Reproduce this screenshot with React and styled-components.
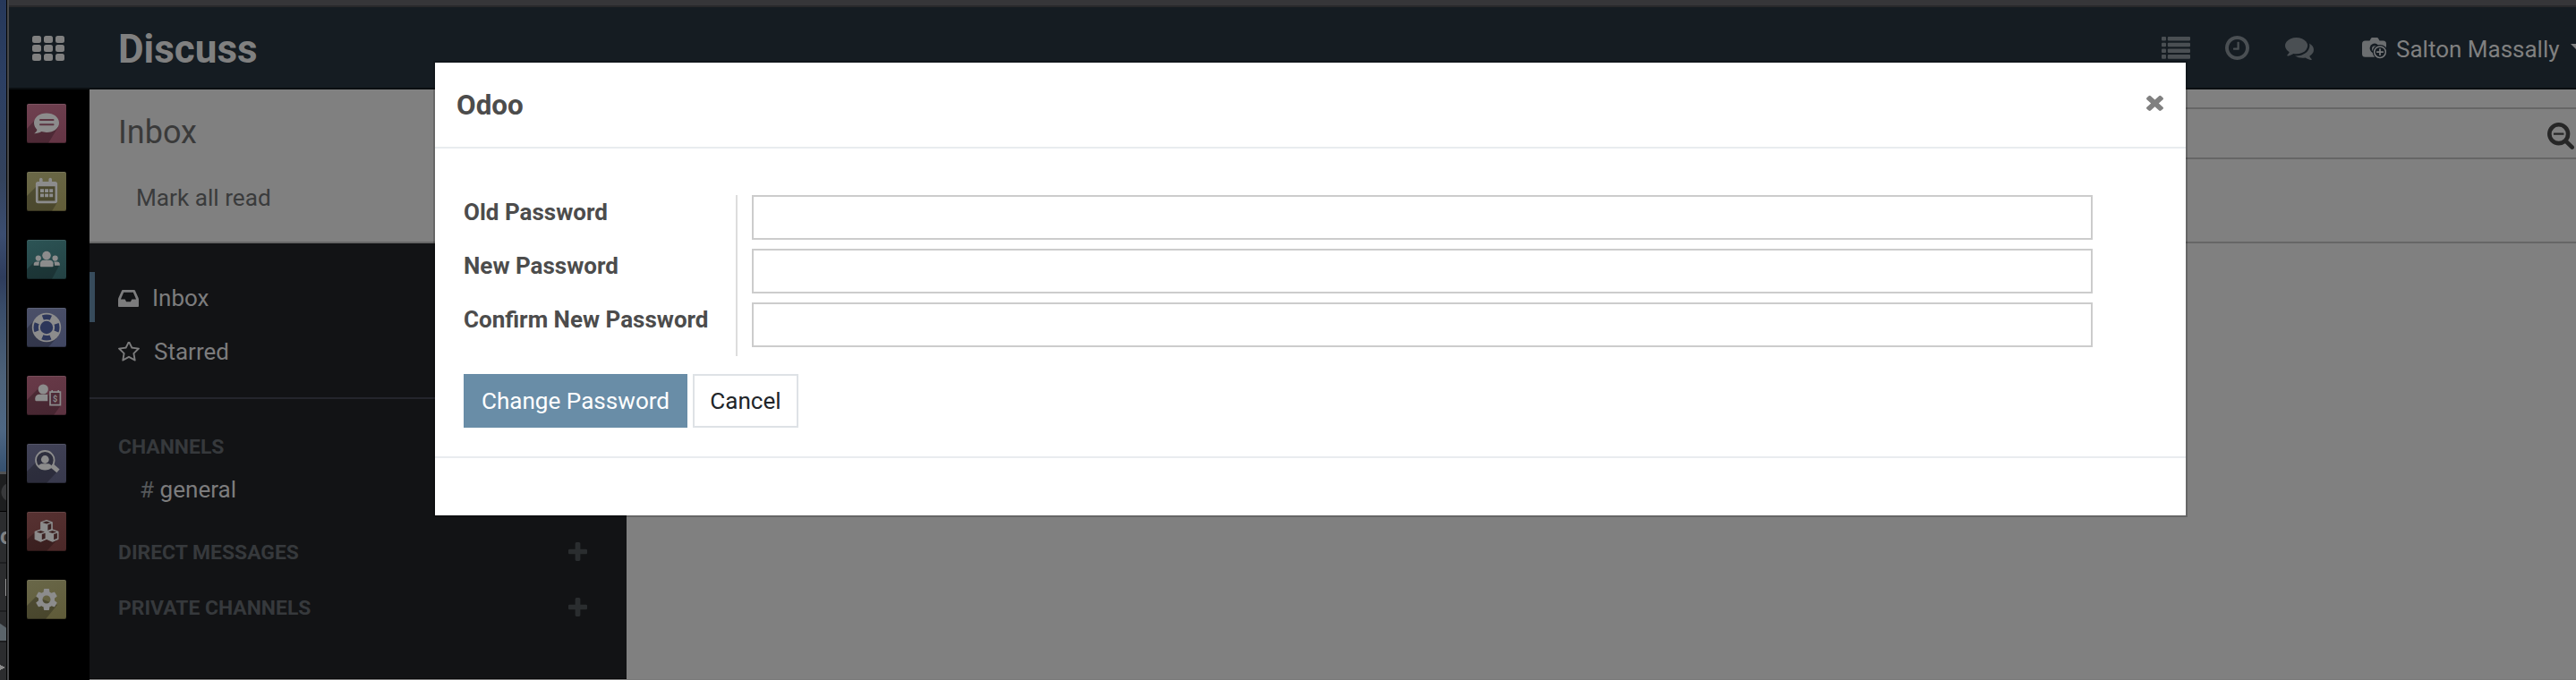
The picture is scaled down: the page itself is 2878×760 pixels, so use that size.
import React from 'react';
import styled, { createGlobalStyle, css } from 'styled-components';
import { MdSettings } from 'react-icons/md';

const GlobalStyle = createGlobalStyle`
  * { box-sizing: border-box; }
  body { margin: 0; overflow: hidden; background: #808080; font-family: Roboto, "Liberation Sans", sans-serif; font-size: 26px; color: #3b3b3b; }
  svg { display: block; flex: none; }
`;

/* ---------- font glyph icons on a 1792 grid ---------- */
const GLYPHS = {
  comments: 'M1408 768q0 139-94 257t-256.5 186.5-353.5 68.5q-86 0-176-16-124 88-278 128-36 9-86 16h-3q-11 0-20.5-8t-11.5-21q-1-3-1-6.5t.5-6.5 2-6l2.5-5 3.5-5.5 4-5 4.5-5 4-4.5q5-6 23-25t26-29.5 22.5-29 25-38.5 20.5-44q-124-72-195-177t-71-224q0-139 94-257t256.5-186.5 353.5-68.5 353.5 68.5 256.5 186.5 94 257zm384 256q0 120-71 224.5t-195 176.5q10 24 20.5 44t25 38.5 22.5 29 26 29.5 23 25q1 1 4 4.5t4.5 5 4 5 3.5 5.5l2.5 5 2 6 .5 6.5-1 6.500q-3 14-13 22t-22 7q-50-7-86-16-154-40-278-128-90 16-176 16-271 0-472-132 58 4 88 4 161 0 309-45t264-129q125-92 192-212t67-254q0-77-23-152 129 71 204 178t75 230z',
  clock: 'M1024 544v448q0 14-9 23t-23 9h-320q-14 0-23-9t-9-23v-64q0-14 9-23t23-9h224v-352q0-14 9-23t23-9h64q14 0 23 9t9 23zm416 352q0-148-73-273t-198-198-273-73-273 73-198 198-73 273 73 273 198 198 273 73 273-73 198-198 73-273zm224 0q0 209-103 385.5t-279.5 279.5-385.5 103-385.5-103-279.5-279.5-103-385.5 103-385.5 279.5-279.5 385.5-103 385.5 103 279.5 279.5 103 385.5z',
  times: 'M1490 1322q0 40-28 68l-136 136q-28 28-68 28t-68-28l-294-294-294 294q-28 28-68 28t-68-28l-136-136q-28-28-28-68t28-68l294-294-294-294q-28-28-28-68t28-68l136-136q28-28 68-28t68 28l294 294 294-294q28-28 68-28t68 28l136 136q28 28 28 68t-28 68l-294 294 294 294q28 28 28 68z',
  searchMinus: 'M1088 800v64q0 13-9.5 22.5t-22.5 9.5h-576q-13 0-22.5-9.5t-9.5-22.5v-64q0-13 9.5-22.5t22.5-9.5h576q13 0 22.5 9.5t9.5 22.5zm128 32q0-185-131.5-316.5t-316.5-131.5-316.5 131.5-131.5 316.5 131.5 316.5 316.5 131.5 316.5-131.5 131.5-316.5zm512 832q0 53-37.5 90.5t-90.5 37.5q-54 0-90-38l-343-342q-179 124-399 124-143 0-273.5-55.5t-225-150-150-225-55.5-273.5 55.5-273.5 150-225 225-150 273.5-55.5 273.5 55.5 225 150 150 225 55.5 273.5q0 220-124 399l343 343q37 37 37 90z',
  star: 'M1201 1004l306-297-422-62-189-382-189 382-422 62 306 297-73 421 378-199 377 199zm527-357q0 22-26 48l-363 354 86 500q1 7 1 20 0 50-41 50-19 0-40-12l-449-236-449 236q-22 12-40 12-21 0-31.5-14.5t-10.5-35.5q0-6 2-20l86-500-364-354q-25-27-25-48 0-37 56-46l502-73 225-455q19-41 49-41t49 41l225 455 502 73q56 9 56 46z',
  plus: 'M1600 736v192q0 40-28 68t-68 28h-416v416q0 40-28 68t-68 28h-192q-40 0-68-28t-28-68v-416h-416q-40 0-68-28t-28-68v-192q0-40 28-68t68-28h416v-416q0-40 28-68t68-28h192q40 0 68 28t28 68v416h416q40 0 68 28t28 68z',
  inbox: 'M1151 960h316q-1-3-2.5-8.5t-2.5-7.5l-212-496h-708l-212 496q-1 3-2.5 8.5t-2.5 7.5h316l95 192h320zm513 30v482q0 26-19 45t-45 19h-1408q-26 0-45-19t-19-45v-482q0-62 25-123l238-552q10-25 36.5-42t52.5-17h832q26 0 52.5 17t36.5 42l238 552q25 61 25 123z',
};

/* box: x, y, width, height of the ink on the 1792 grid */
const Glyph = ({ name, box, width, height }) => (
  <svg viewBox={box} width={width} height={height} preserveAspectRatio="none" fill="currentColor">
    <path d={GLYPHS[name]} />
  </svg>
);

/* ---------- page frame ---------- */
const Screen = styled.div`
  position: relative;
  display: flex;
  width: 100%;
  height: 760px;
  overflow: hidden;
`;

const DesktopEdge = styled.div`
  flex: none;
  width: 7px;
  height: 760px;
  overflow: hidden;
  display: flex;
  flex-direction: column;
  background: #2b2c2e;
`;

const Wallpaper = styled.div`
  flex: none;
  height: 527px;
  background: linear-gradient(#26385a 0, #2c3f63 90px, #33425c 200px, #3b4d70 262px, #2e3c5c 310px, #394c69 345px, #4c6178 420px, #4e6784 480px, #35506f 527px);
`;

const BackWindow = styled.div`
  flex: 1;
  min-height: 0;
  border-top: 3px solid #505254;
  font-size: 25px;
  font-weight: 700;
  line-height: 56px;
  color: #808284;
`;

const BackTab = styled.div`
  height: 42px;
  border-bottom: 1px solid #000;
  background: radial-gradient(circle 11px at 12px 20px, #38393b 10px, transparent 11px), #1d1e1f;
`;

const BackRow = styled.div`
  height: ${(p) => p.$h}px;
  border-bottom: 2px solid #1d1e20;
  background: ${(p) => p.$bg || '#2b2c2e'};
  overflow: hidden;
`;

const Fragment = styled.span`
  display: block;
`;

const Caret = styled.i`
  display: block;
  width: 1px;
  height: 19px;
  margin: 17px 0 0 6px;
  background: #9a9a9a;
`;

const WindowFrame = styled.div`
  flex: none;
  width: 3px;
  border-left: 1px solid #050505;
  background: #47484a;
`;

const Window = styled.div`
  flex: 1;
  min-width: 0;
  display: flex;
  flex-direction: column;
`;

const Chrome = styled.div`
  flex: none;
  height: 8px;
  background: #363639;
  border-bottom: 2px solid #29292b;
`;

/* ---------- navbar ---------- */
const Navbar = styled.header`
  flex: none;
  display: flex;
  align-items: center;
  height: 92px;
  background: #151c22;
  border-bottom: 2px solid #0a0e11;
`;

const AppsToggle = styled.div`
  display: grid;
  grid-template-columns: repeat(3, 10px);
  grid-auto-rows: 8px;
  gap: 2px 3px;
  width: 36px;
  margin-left: 26px;
  margin-top: 2px;
`;

const Cell = styled.i`
  border-radius: 2.5px;
  background: #808080;
`;

const Brand = styled.div`
  flex: 1;
  margin-left: 60px;
  padding-top: 3px;
  font-size: 44px;
  line-height: 52px;
  font-weight: 700;
  color: #808080;
`;

const Systray = styled.div`
  display: flex;
  align-items: center;
  color: #4a4f53;
`;

const TrayItem = styled.div`
  width: ${(p) => p.$w}px;
  padding-top: ${(p) => p.$top || 0}px;
`;

const UserMenu = styled.div`
  display: flex;
  align-items: center;
  width: 239px;
  gap: 10px;
  padding-top: 3px;
  line-height: 30px;
  color: #808080;
  white-space: nowrap;
`;

const DropArrow = styled.i`
  margin-left: 2px;
  margin-top: -4px;
  border: 7px solid transparent;
  border-bottom: 0;
  border-top-color: #808080;
`;

const Main = styled.div`
  flex: 1;
  min-height: 0;
  display: flex;
`;

/* ---------- app rail ---------- */
const Rail = styled.nav`
  flex: none;
  width: 90px;
  padding: 16px 0 0 20px;
  display: flex;
  flex-direction: column;
  gap: 32px;
  background: #000;
`;

const tileTint = css`
  background: linear-gradient(160deg, ${(p) => p.$from}, ${(p) => p.$to});
`;

const Tile = styled.div`
  flex: none;
  width: 44px;
  height: 44px;
  border-radius: 2px;
  overflow: hidden;
  box-shadow: inset 0 1px 0 rgba(255, 255, 255, 0.1), inset 0 -1px 0 rgba(0, 0, 0, 0.25);
  ${tileTint}
`;

/* ---------- content ---------- */
const Content = styled.div`
  flex: 1;
  min-width: 0;
  display: flex;
  flex-direction: column;
`;

const ControlPanel = styled.div`
  flex: none;
  display: flex;
  justify-content: space-between;
  height: 172px;
  border-bottom: 2px solid #666;
  background: #808080;
`;

const PanelTitle = styled.div`
  padding: 25px 0 0 32px;
`;

const Crumb = styled.div`
  font-size: 36px;
  line-height: 46px;
  color: #3a3a3a;
`;

const PanelAction = styled.div`
  margin: 34px 0 0 20px;
  font-size: 26.2px;
  line-height: 32px;
  color: #3a3b3c;
`;

const SearchField = styled.div`
  width: 1480px;
  height: 58px;
  margin-top: 20px;
  padding: 15px 2px 0 0;
  display: flex;
  justify-content: flex-end;
  border: solid #666;
  border-width: 2px 0;
  color: #262626;
`;

const Body = styled.div`
  flex: 1;
  display: flex;
  border-bottom: 1px solid #797979;
`;

const Sidebar = styled.aside`
  width: 600px;
  padding-top: 32px;
  background: #121315;
  border-bottom: 1px solid #070708;
  color: #7c7c7d;
`;

const Mailbox = styled.div`
  display: flex;
  align-items: center;
  height: 56px;
  margin-bottom: 4px;
  padding: 2px 0 0 ${(p) => (p.$active ? 26 : 32)}px;
  border-left: ${(p) => (p.$active ? '6px solid #374b5b' : '0')};
  line-height: 30px;
  gap: ${(p) => p.$gap}px;
`;

const Divider = styled.hr`
  height: 2px;
  margin: 24px 0 0;
  border: 0;
  background: #24252c;
`;

const GroupTitle = styled.div`
  display: flex;
  justify-content: space-between;
  align-items: center;
  height: 30px;
  margin-top: ${(p) => p.$top}px;
  padding: 0 44px 0 32px;
  font-size: 22.9px;
  line-height: 30px;
  font-weight: 700;
  color: #36393c;
  svg { color: #2a2d2f; margin-bottom: 4px; }
`;

const Channel = styled.div`
  margin: 16px 0 0 56px;
  font-size: 26.1px;
  line-height: 32px;
`;

const Hash = styled.span`
  color: #55585a;
`;

/* ---------- modal ---------- */
const Dialog = styled.section`
  position: absolute;
  left: 484px;
  top: 68px;
  width: 1960px;
  height: 510px;
  border: 2px solid rgba(0, 0, 0, 0.2);
  background: #fff;
  background-clip: padding-box;
`;

const DialogHeader = styled.div`
  display: flex;
  justify-content: space-between;
  height: 96px;
  padding: 29px 25px 0 24px;
  border-bottom: 2px solid #e9ecef;
  font-size: 31.4px;
  line-height: 37px;
  font-weight: 700;
  color: #4c4c4c;
`;

const CloseButton = styled.div`
  padding-top: 6px;
  color: #808080;
`;

const Form = styled.div`
  height: 346px;
  padding: 52px 104px 0 32px;
  border-bottom: 2px solid #e9ecef;
`;

const FieldGroup = styled.div`
  display: grid;
  grid-template-columns: 306px 1fr;
  grid-auto-rows: 60px;
`;

const FieldLabel = styled.label`
  border-right: 2px solid #ddd;
  font-weight: 700;
  line-height: 38px;
  color: #4c4c4c;
`;

const Input = styled.input`
  width: auto;
  height: 50px;
  margin: 0 0 0 16px;
  padding: 0 8px;
  border: 2px solid #ccc;
  border-radius: 0;
  background: #fff;
  font: inherit;
`;

const Actions = styled.div`
  display: flex;
  gap: 6px;
  margin-top: 20px;
`;

const Button = styled.button`
  height: 60px;
  width: ${(p) => (p.$primary ? 250 : 118)}px;
  padding: 0;
  border: 2px solid ${(p) => (p.$primary ? '#698da7' : '#dee2e6')};
  background: ${(p) => (p.$primary ? '#698da7' : '#fff')};
  color: ${(p) => (p.$primary ? '#fff' : '#212529')};
  font: 26.1px/54px Roboto, sans-serif;
`;

/* ---------- app tile drawings ---------- */
const INK = '#8c8c8c';
const shade = 'rgba(0,0,0,.24)';
const Art = ({ shadow, children }) => (
  <svg viewBox="0 0 44 44" width="44" height="44" fill={INK}>
    <path d={shadow} fill={shade} />
    {children}
  </svg>
);

const Cube = ({ x, y }) => (
  <g transform={`translate(${x} ${y})`} stroke={INK} strokeWidth="1.2" strokeLinejoin="round">
    <path d="M0-6.5L6.2-4.2V4L0 6.6L-6.2 4V-4.2Z" />
    <path d="M-4.6-4.1L0-5.6L4.6-4.1L0-2.5Z" fill="#3c2323" stroke="none" />
    <path d="M1.4-1.4L5.2-2.8V3.2L1.4 4.8Z" fill="#3c2323" stroke="none" />
  </g>
);

const APPS = [
  {
    id: 'discuss', from: '#6f4150', to: '#643444',
    art: (
      <Art shadow="M10 17L0 28V44H24L35 26Z">
        <path d="M22 10.5c8 0 14 4.600 14 10.700s-6 10.700-14 10.700c-2 0-4-.3-5.700-.8C14 32.500 11 33.300 8.200 33.200c1.700-1.200 2.800-2.700 3.200-4.300C9.300 27 8 24.200 8 21.200 8 15.100 14 10.500 22 10.500z" />
        <path d="M15 18H29.500M15 23.200H29.500" stroke="#5b3441" strokeWidth="2" strokeLinecap="round" />
      </Art>
    ),
  },
  {
    id: 'calendar', from: '#6a6848', to: '#625d38',
    art: (
      <Art shadow="M11 16L0 27V44H28L34 34Z">
        <path d="M12.500 11H14V8.500a1.700 1.700 0 013.600 0V11h6.800V8.500a1.700 1.700 0 013.600 0V11h3.500a2.600 2.600 0 012.600 2.600v19a2.600 2.600 0 01-2.600 2.600h-19a2.600 2.600 0 01-2.600-2.600v-19A2.600 2.600 0 0112.500 11z" />
        <path d="M12.600 16.300H31.500V32.500H12.600Z" fill="#4a472d" />
        <path d="M15 19.300h4v3.800h-4zM20.100 19.300h4v3.800h-4zM25.200 19.300h4v3.800h-4zM15 24.500h4v3.800h-4zM20.100 24.500h4v3.800h-4zM25.200 24.500h4v3.800h-4z" />
      </Art>
    ),
  },
  {
    id: 'contacts', from: '#2c5455', to: '#234143',
    art: (
      <Art shadow="M8 25L0 33V44H28L37 27Z">
        <circle cx="22" cy="17.600" r="4.800" />
        <circle cx="12.800" cy="20.600" r="3.100" />
        <circle cx="31.600" cy="20.600" r="3.100" />
        <path d="M14.800 29v-2.500c0-2.500 2-3.800 4-3.800h6.800c2 0 4 1.300 4 3.800V29a1.200 1.200 0 01-1.200 1.200H16A1.200 1.200 0 0114.800 29z" />
        <path d="M7.700 28.800v-1.800c0-1.600 1.300-2.600 3-2.600h3.600c-.6 1-.8 2-.8 4.400zM36.800 28.800v-1.800c0-1.600-1.300-2.600-3-2.600h-3.600c.6 1 .8 2 .8 4.400z" />
      </Art>
    ),
  },
  {
    id: 'helpdesk', from: '#4b5068', to: '#404662',
    art: (
      <Art shadow="M10 12L0 23V44H24L35 32Z">
        <circle cx="22" cy="22" r="16.200" />
        <circle cx="22" cy="22" r="11.800" fill="none" stroke="#2c365a" strokeWidth="5.400" strokeDasharray="9.270 9.270" strokeDashoffset="4.635" />
        <circle cx="22" cy="22" r="7.200" fill="#2c365a" />
      </Art>
    ),
  },
  {
    id: 'expenses', from: '#683a48', to: '#5c3240',
    art: (
      <Art shadow="M14 13L0 27V44H30L38 33Z">
        <circle cx="18.300" cy="15" r="5.600" />
        <path d="M9.300 27v-1.800c0-2.800 2.200-4.400 4.500-4.400h9.500v7.400H10.500A1.200 1.200 0 019.300 27z" />
        <path d="M26 18.200H37.400V32.700H26Z" fill="#4e2b37" stroke={INK} strokeWidth="1.700" />
        <path d="M28.200 16v3M35.200 16v3" stroke={INK} strokeWidth="1.600" />
        <text x="31.700" y="29" fontSize="9" fontWeight="700" textAnchor="middle">$</text>
      </Art>
    ),
  },
  {
    id: 'recruitment', from: '#414257', to: '#38394c',
    art: (
      <Art shadow="M11 20L0 31V44H22L34 31Z">
        <path d="M27.500 24L35 30.300" stroke={INK} strokeWidth="5" strokeLinecap="butt" />
        <circle cx="20.300" cy="18.300" r="10.300" fill="#2e2f3e" stroke={INK} strokeWidth="1.800" />
        <circle cx="20.300" cy="17.500" r="4.400" />
        <path d="M12.500 25c1.200-2.300 3.700-2.800 5.300-2.800h5c1.700 0 4.100.5 5.300 2.800-2 2.400-4.800 3.500-7.800 3.500s-5.800-1.100-7.800-3.500z" />
      </Art>
    ),
  },
  {
    id: 'inventory', from: '#573232', to: '#4b2828',
    art: (
      <Art shadow="M9 23L0 31V44H22L35 30Z">
        <Cube x={22} y={16} />
        <Cube x={15.400} y={26.500} />
        <Cube x={28.700} y={26.500} />
      </Art>
    ),
  },
  {
    id: 'settings', from: '#696749', to: '#5f5b38',
    art: (
      <Art shadow="M10 19L0 29V44H21L34 28Z">
        <MdSettings x="7" y="7" size={30} color={INK} />
      </Art>
    ),
  },
];

const ListIcon = () => (
  <svg width="32" height="25" viewBox="0 0 32 25" fill="currentColor">
    {[0, 6.700, 13.400, 20.100].map((y) => (
      <g key={y}>
        <rect x="0" y={y} width="5" height="4.600" rx="1" />
        <rect x="6.800" y={y} width="25.200" height="4.600" rx="1" />
      </g>
    ))}
  </svg>
);

const CameraIcon = () => (
  <svg width="28" height="25" viewBox="0 0 28 25">
    <path d="M3.500 3.500h5L10 .8c.3-.5.7-.8 1.200-.8h5.600c.5 0 .9.300 1.200.8l1.500 2.700h4A3.500 3.500 0 0127 7v11.200a3.500 3.500 0 01-3.500 3.500h-20A3.500 3.500 0 010 18.200V7a3.500 3.500 0 013.500-3.500z" fill="#6b6e70" />
    <circle cx="14" cy="12" r="5.400" fill="#151c22" />
    <circle cx="14.400" cy="12.600" r="3.400" fill="#6b6e70" />
    <circle cx="20" cy="16.200" r="8.300" fill="#151c22" />
    <circle cx="20" cy="16.200" r="6.300" fill="#151c22" stroke="#77797b" strokeWidth="1.500" />
    <path d="M20 12.300v7.800M16.100 16.200h7.800" stroke="#77797b" strokeWidth="1.700" />
  </svg>
);

const PlusIcon = () => <Glyph name="plus" box="192 128 1408 1408" width={21} height={21} />;

export default function App() {
  return (
    <Screen>
      <GlobalStyle />
      <DesktopEdge>
        <Wallpaper />
        <BackWindow>
          <BackTab />
          <BackRow $h={58}><Fragment>o</Fragment></BackRow>
          <BackRow $h={54}><Caret /></BackRow>
          <BackRow $h={34} $bg="linear-gradient(215deg, #2b2c2e 14px, #5b646a 15px)" />
          <BackRow $h={60} $bg="conic-gradient(from 245deg at 6px 28px, #8a8a8a 50deg, #2b2c2e 51deg)" />
        </BackWindow>
      </DesktopEdge>
      <WindowFrame />
      <Window>
        <Chrome />
        <Navbar>
          <AppsToggle>
            {Array.from({ length: 9 }, (_, i) => <Cell key={i} />)}
          </AppsToggle>
          <Brand>Discuss</Brand>
          <Systray>
            <TrayItem $w={71}><ListIcon /></TrayItem>
            <TrayItem $w={67}><Glyph name="clock" box="128 128 1536 1536" width={27} height={27} /></TrayItem>
            <TrayItem $w={86} $top={2}><Glyph name="comments" box="0 256 1792 1408" width={32} height={25} /></TrayItem>
            <UserMenu>
              <CameraIcon />
              <span>Salton Massally</span>
              <DropArrow />
            </UserMenu>
          </Systray>
        </Navbar>
        <Main>
          <Rail>
            {APPS.map((app) => (
              <Tile key={app.id} $from={app.from} $to={app.to}>{app.art}</Tile>
            ))}
          </Rail>
          <Content>
            <ControlPanel>
              <PanelTitle>
                <Crumb>Inbox</Crumb>
                <PanelAction>Mark all read</PanelAction>
              </PanelTitle>
              <SearchField>
                <Glyph name="searchMinus" box="64 128 1664 1664" width={30} height={30} />
              </SearchField>
            </ControlPanel>
            <Body>
              <Sidebar>
                <Mailbox $active $gap={15}>
                  <Glyph name="inbox" box="128 256 1536 1280" width={23} height={19} />
                  Inbox
                </Mailbox>
                <Mailbox $gap={16}>
                  <Glyph name="star" box="64 128 1664 1591" width={24} height={23} />
                  Starred
                </Mailbox>
                <Divider />
                <GroupTitle $top={39}>CHANNELS</GroupTitle>
                <Channel><Hash>#</Hash> general</Channel>
                <GroupTitle $top={40}>DIRECT MESSAGES<PlusIcon /></GroupTitle>
                <GroupTitle $top={32}>PRIVATE CHANNELS<PlusIcon /></GroupTitle>
              </Sidebar>
            </Body>
          </Content>
        </Main>
      </Window>
      <Dialog>
        <DialogHeader>
          Odoo
          <CloseButton>
            <Glyph name="times" box="302 238 1188 1316" width={19} height={19} />
          </CloseButton>
        </DialogHeader>
        <Form>
          <FieldGroup>
            {['Old Password', 'New Password', 'Confirm New Password'].map((label) => (
              <React.Fragment key={label}>
                <FieldLabel>{label}</FieldLabel>
                <Input type="password" aria-label={label} />
              </React.Fragment>
            ))}
          </FieldGroup>
          <Actions>
            <Button $primary>Change Password</Button>
            <Button>Cancel</Button>
          </Actions>
        </Form>
      </Dialog>
    </Screen>
  );
}
